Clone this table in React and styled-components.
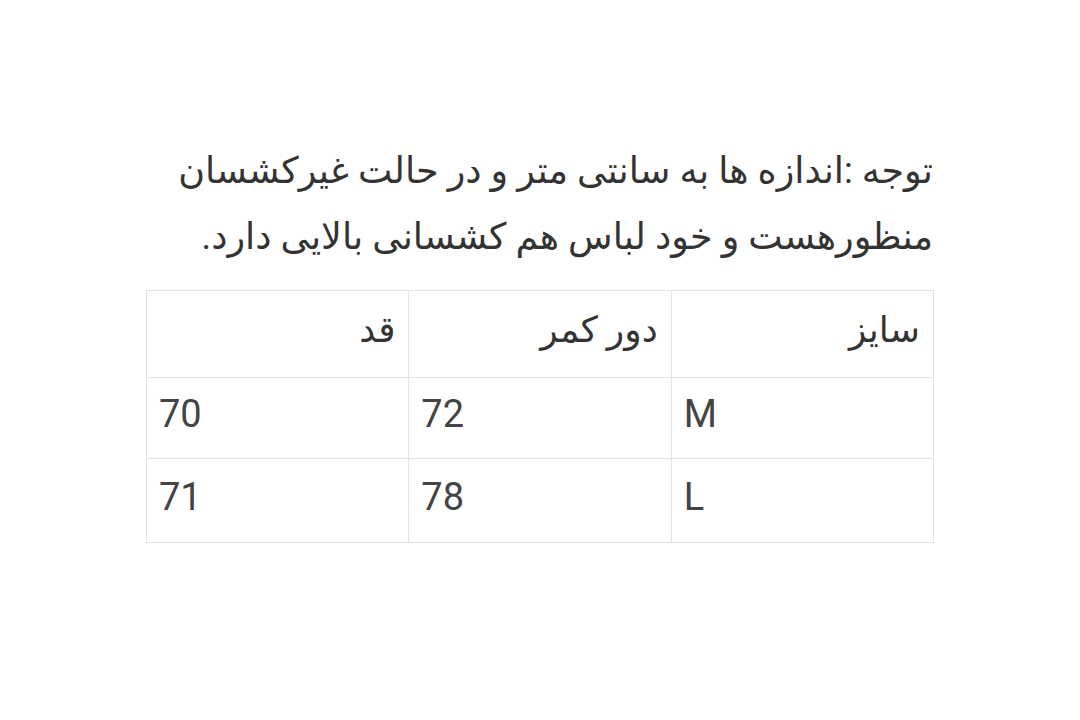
import React from "react";
import styled, { createGlobalStyle } from "styled-components";

const GlobalStyle = createGlobalStyle`
  html, body {
    margin: 0;
    padding: 0;
    background: #ffffff;
  }
  body {
    font-family: "Roboto", "DejaVu Sans", sans-serif;
    color: #3a3a3a;
  }
`;

const headers = ["سایز", "دور کمر", "قد"];
const rows = [
  { pad: "16px 12px 24px", cells: ["M", "72", "70"] },
  { pad: "18px 12px 25px", cells: ["L", "78", "71"] },
];

const App = () => {
  return (
    <>
      <GlobalStyle />
      <Page>
        <Content dir="rtl">
          <Note>
            توجه :اندازه ها به سانتی متر و در حالت غیرکشسان منظورهست و خود لباس
            هم کشسانی بالایی دارد.
          </Note>
          <Table>
            <thead>
              <tr>
                {headers.map((h) => (
                  <HeadCell key={h}>{h}</HeadCell>
                ))}
              </tr>
            </thead>
            <tbody>
              {rows.map((r, i) => (
                <tr key={i}>
                  {r.cells.map((v, j) => (
                    <Cell key={j} dir="ltr" $pad={r.pad}>
                      {v}
                    </Cell>
                  ))}
                </tr>
              ))}
            </tbody>
          </Table>
        </Content>
      </Page>
    </>
  );
};

export default App;

const Page = styled.div`
  width: 1080px;
  height: 720px;
  display: flex;
  justify-content: center;
  padding-top: 138px;
  box-sizing: border-box;
`;

const Content = styled.div`
  width: 788px;
  display: flex;
  flex-direction: column;
`;

const Note = styled.p`
  margin: 0 0 20px 0;
  padding: 0 1px;
  font-size: 36.5px;
  line-height: 66px;
  text-align: right;
  color: #333333;
`;

const Table = styled.table`
  width: 100%;
  border-collapse: collapse;
  table-layout: fixed;
`;

const HeadCell = styled.th`
  padding: 19px 13px 27px 13px;
  line-height: 40px;
  border: 1px solid #e2e2e2;
  font-size: 36px;
  font-weight: normal;
  text-align: right;
  color: #333333;
`;

const Cell = styled.td`
  padding: ${(p) => p.$pad};
  line-height: 40px;
  border: 1px solid #e2e2e2;
  font-size: 38px;
  text-align: left;
  color: #444444;
`;
